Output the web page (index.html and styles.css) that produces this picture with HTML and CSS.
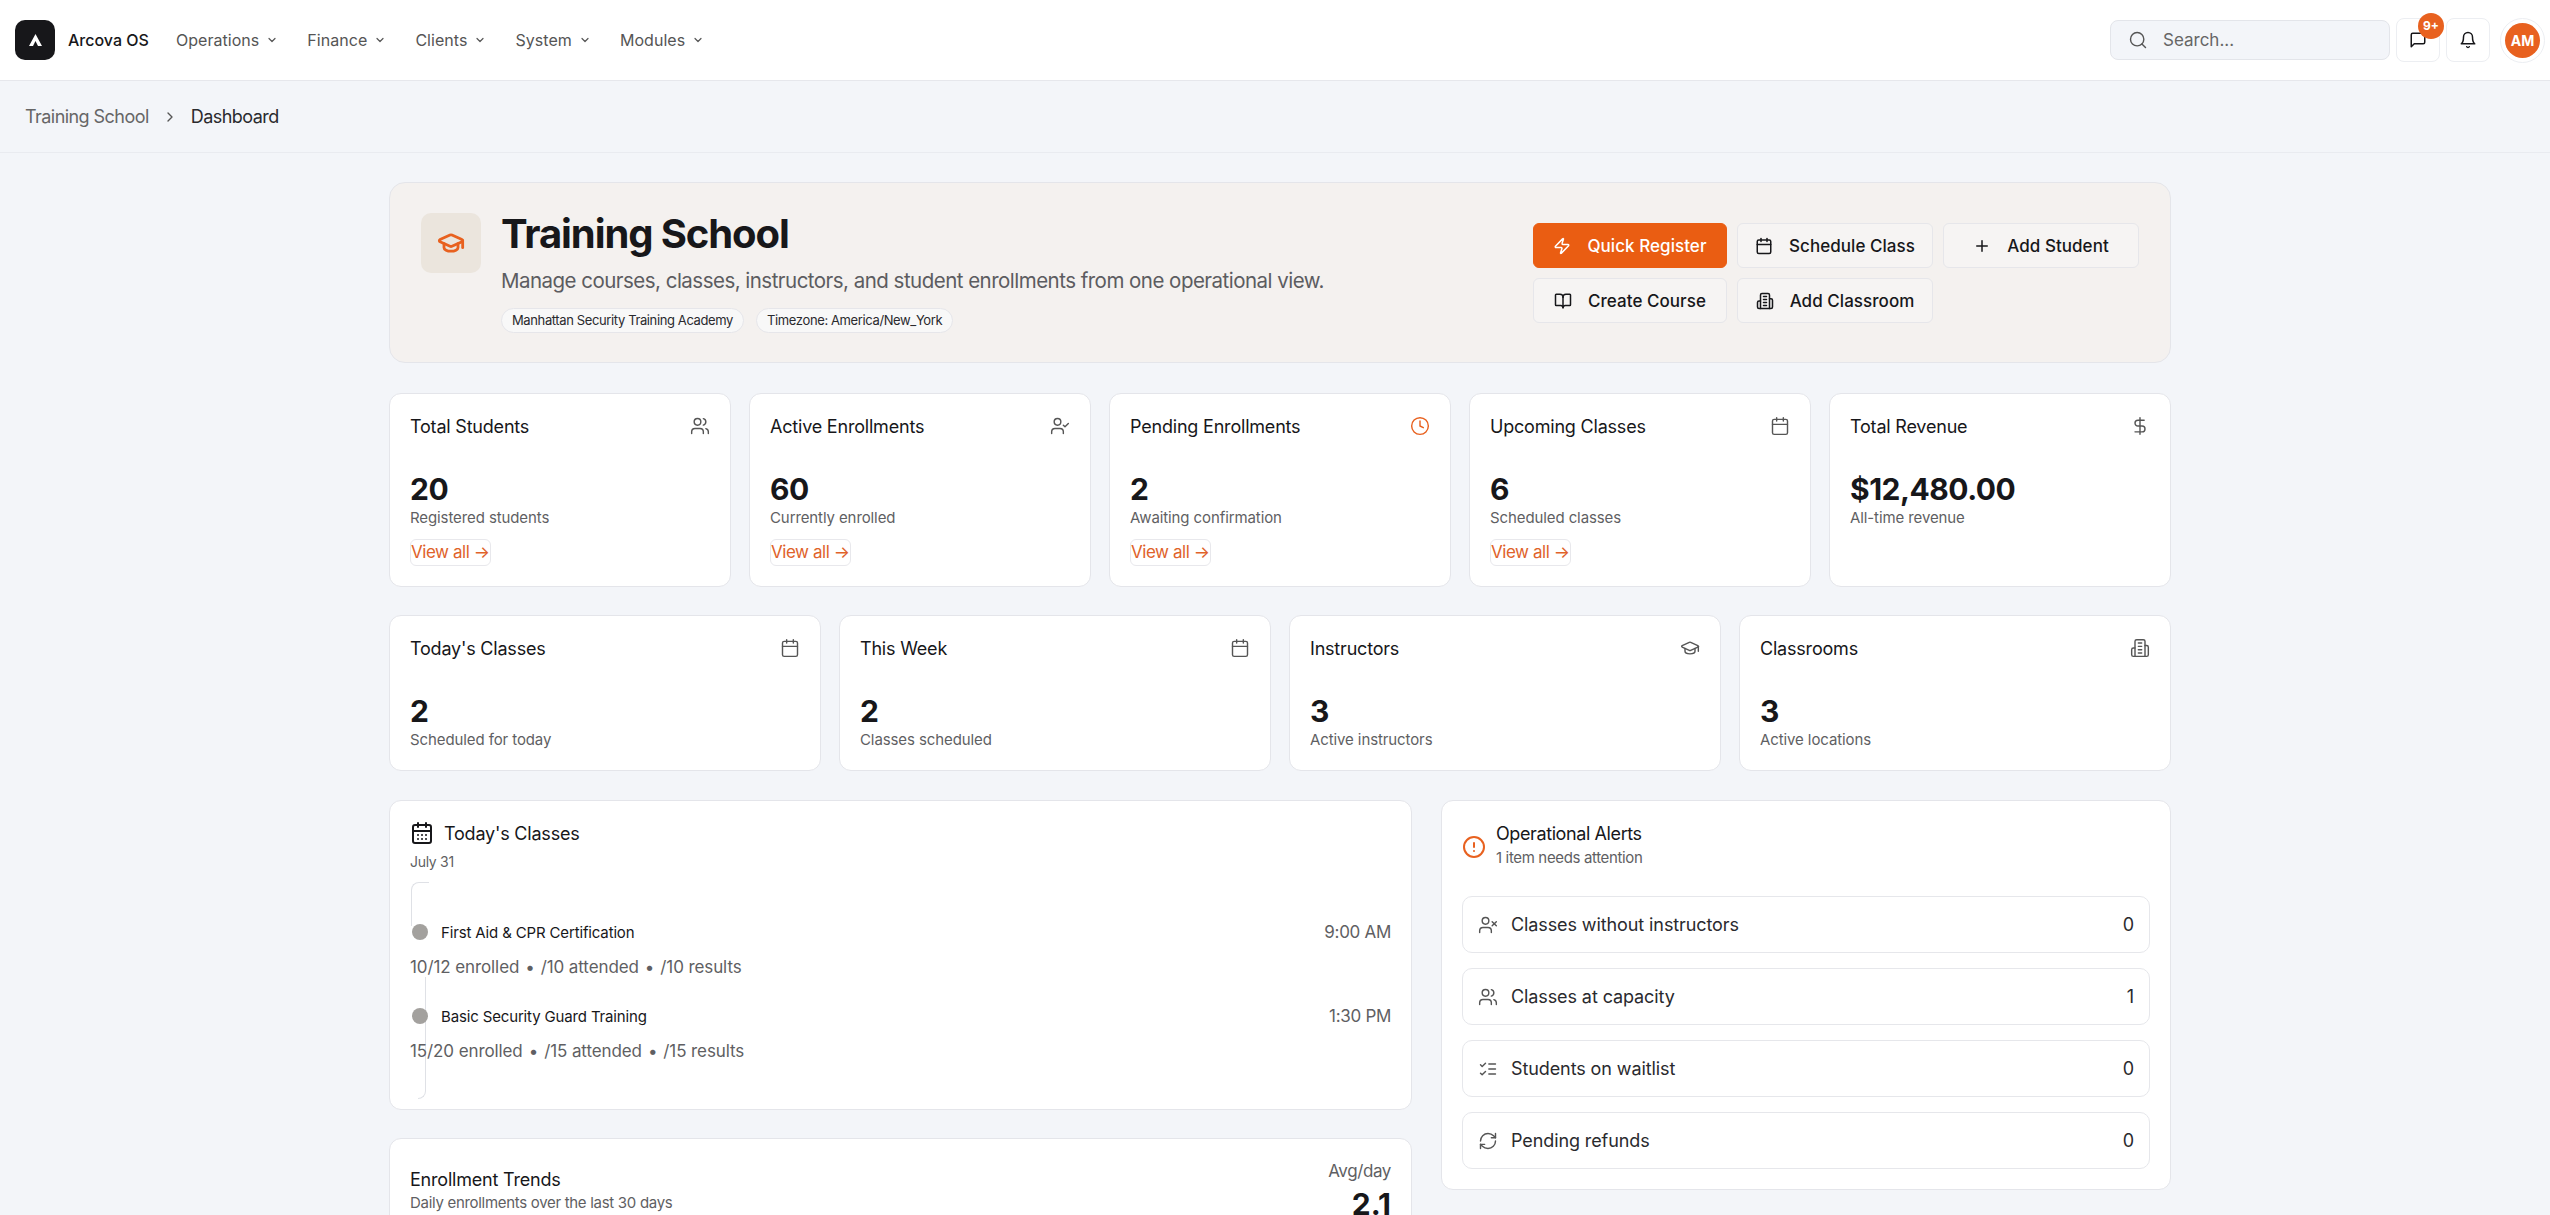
FILE: index.html
```html
<!DOCTYPE html>
<html>
<head>
<title>Training School - Arcova OS</title>
<meta charset="UTF-8">
<meta name="viewport" content="width=device-width, initial-scale=1.0">
<link rel="stylesheet" href="styles.css">
</head>
<body>
<svg class="sprite" width="0" height="0">
  <symbol id="i-chev" viewBox="0 0 24 24"><path d="m6 9 6 6 6-6"/></symbol>
  <symbol id="i-right" viewBox="0 0 24 24"><path d="m9 18 6-6-6-6"/></symbol>
  <symbol id="i-search" viewBox="0 0 24 24"><circle cx="11" cy="11" r="8"/><path d="m21 21-4.3-4.3"/></symbol>
  <symbol id="i-msg" viewBox="0 0 24 24"><path d="M21 15a2 2 0 0 1-2 2H7l-4 4V5a2 2 0 0 1 2-2h14a2 2 0 0 1 2 2z"/></symbol>
  <symbol id="i-bell" viewBox="0 0 24 24"><path d="M6 8a6 6 0 0 1 12 0c0 7 3 9 3 9H3s3-2 3-9"/><path d="M10.3 21a1.94 1.94 0 0 0 3.4 0"/></symbol>
  <symbol id="i-cap" viewBox="0 0 24 24"><path d="M21.42 10.92a1 1 0 0 0-.02-1.84L12.83 5.18a2 2 0 0 0-1.66 0L2.6 9.08a1 1 0 0 0 0 1.83l8.57 3.91a2 2 0 0 0 1.66 0z"/><path d="M22 10v6"/><path d="M6 12.5V16a6 3 0 0 0 12 0v-3.5"/></symbol>
  <symbol id="i-zap" viewBox="0 0 24 24"><path d="M4 14a1 1 0 0 1-.78-1.63l9.9-10.2a.5.5 0 0 1 .86.46l-1.92 6.02A1 1 0 0 0 13 10h7a1 1 0 0 1 .78 1.63l-9.9 10.2a.5.5 0 0 1-.86-.46l1.92-6.02A1 1 0 0 0 11 14z"/></symbol>
  <symbol id="i-cal" viewBox="0 0 24 24"><path d="M8 2v4"/><path d="M16 2v4"/><rect x="3" y="4" width="18" height="18" rx="2"/><path d="M3 10h18"/></symbol>
  <symbol id="i-cal-days" viewBox="0 0 24 24"><path d="M8 2v4"/><path d="M16 2v4"/><rect x="3" y="4" width="18" height="18" rx="2"/><path d="M3 10h18"/><path d="M8 14h.01M12 14h.01M16 14h.01M8 18h.01M12 18h.01M16 18h.01"/></symbol>
  <symbol id="i-plus" viewBox="0 0 24 24"><path d="M5 12h14"/><path d="M12 5v14"/></symbol>
  <symbol id="i-book" viewBox="0 0 24 24"><path d="M12 7v14"/><path d="M3 18a1 1 0 0 1-1-1V4a1 1 0 0 1 1-1h5a4 4 0 0 1 4 4 4 4 0 0 1 4-4h5a1 1 0 0 1 1 1v13a1 1 0 0 1-1 1h-6a3 3 0 0 0-3 3 3 3 0 0 0-3-3z"/></symbol>
  <symbol id="i-building" viewBox="0 0 24 24"><path d="M6 22V4a2 2 0 0 1 2-2h8a2 2 0 0 1 2 2v18z"/><path d="M6 12H4a2 2 0 0 0-2 2v6a2 2 0 0 0 2 2h2"/><path d="M18 9h2a2 2 0 0 1 2 2v9a2 2 0 0 1-2 2h-2"/><path d="M10 6h4M10 10h4M10 14h4M10 18h4"/></symbol>
  <symbol id="i-users" viewBox="0 0 24 24"><path d="M16 21v-2a4 4 0 0 0-4-4H6a4 4 0 0 0-4 4v2"/><circle cx="9" cy="7" r="4"/><path d="M22 21v-2a4 4 0 0 0-3-3.87"/><path d="M16 3.13a4 4 0 0 1 0 7.75"/></symbol>
  <symbol id="i-user-check" viewBox="0 0 24 24"><path d="M16 21v-2a4 4 0 0 0-4-4H6a4 4 0 0 0-4 4v2"/><circle cx="9" cy="7" r="4"/><path d="m16 11 2 2 4-4"/></symbol>
  <symbol id="i-user-x" viewBox="0 0 24 24"><path d="M16 21v-2a4 4 0 0 0-4-4H6a4 4 0 0 0-4 4v2"/><circle cx="9" cy="7" r="4"/><path d="m17 8 5 5"/><path d="m22 8-5 5"/></symbol>
  <symbol id="i-clock" viewBox="0 0 24 24"><circle cx="12" cy="12" r="10"/><path d="M12 6v6l4 2"/></symbol>
  <symbol id="i-dollar" viewBox="0 0 24 24"><path d="M12 2v20"/><path d="M17 5H9.5a3.5 3.5 0 0 0 0 7h5a3.5 3.5 0 0 1 0 7H6"/></symbol>
  <symbol id="i-alert" viewBox="0 0 24 24"><circle cx="12" cy="12" r="10"/><path d="M12 8v4"/><path d="M12 16h.01"/></symbol>
  <symbol id="i-list" viewBox="0 0 24 24"><path d="m3 7 2 2 4-4"/><path d="m3 17 2 2 4-4"/><path d="M13 6h8"/><path d="M13 12h8"/><path d="M13 18h8"/></symbol>
  <symbol id="i-refresh" viewBox="0 0 24 24"><path d="M3 12a9 9 0 0 1 9-9 9.75 9.75 0 0 1 6.74 2.74L21 8"/><path d="M21 3v5h-5"/><path d="M21 12a9 9 0 0 1-9 9 9.75 9.75 0 0 1-6.74-2.74L3 16"/><path d="M8 16H3v5"/></symbol>
</svg>

<header class="top-bar">
  <div class="logo"><svg viewBox="0 0 40 40" width="40" height="40"><path class="logo-mark" d="M20.5 14 L27 26 H23 L20.5 21 L18 26 H14 Z"/></svg></div>
  <span class="brand">Arcova OS</span>
  <nav class="nav">
    <a>Operations <svg class="ico ico-12"><use href="#i-chev"/></svg></a>
    <a>Finance <svg class="ico ico-12"><use href="#i-chev"/></svg></a>
    <a>Clients <svg class="ico ico-12"><use href="#i-chev"/></svg></a>
    <a>System <svg class="ico ico-12"><use href="#i-chev"/></svg></a>
    <a>Modules <svg class="ico ico-12"><use href="#i-chev"/></svg></a>
  </nav>
  <div class="top-right">
    <div class="search"><svg class="ico ico-20"><use href="#i-search"/></svg><span>Search...</span></div>
    <div class="icon-btn"><svg class="ico ico-18 dark"><use href="#i-msg"/></svg><span class="badge">9+</span></div>
    <div class="icon-btn"><svg class="ico ico-18 dark"><use href="#i-bell"/></svg></div>
    <div class="avatar"><span>AM</span></div>
  </div>
</header>

<div class="crumbs">
  <span>Training School</span>
  <svg class="ico ico-16"><use href="#i-right"/></svg>
  <span class="crumb-on">Dashboard</span>
</div>

<main class="container">
  <section class="hero">
    <div class="hero-left">
      <div class="hero-icon"><svg class="ico ico-28 orange"><use href="#i-cap"/></svg></div>
      <div class="hero-text">
        <h1>Training School</h1>
        <p class="hero-sub">Manage courses, classes, instructors, and student enrollments from one operational view.</p>
        <div class="chips"><span class="chip">Manhattan Security Training Academy</span><span class="chip">Timezone: America/New_York</span></div>
      </div>
    </div>
    <div class="hero-actions">
      <button class="btn btn-main"><svg class="ico ico-18"><use href="#i-zap"/></svg>Quick Register</button>
      <button class="btn"><svg class="ico ico-18"><use href="#i-cal"/></svg>Schedule Class</button>
      <button class="btn"><svg class="ico ico-18"><use href="#i-plus"/></svg>Add Student</button>
      <button class="btn"><svg class="ico ico-18"><use href="#i-book"/></svg>Create Course</button>
      <button class="btn"><svg class="ico ico-18"><use href="#i-building"/></svg>Add Classroom</button>
    </div>
  </section>

  <section class="stats stats-5">
    <div class="stat">
      <div class="stat-head"><span>Total Students</span><svg class="ico ico-20"><use href="#i-users"/></svg></div>
      <div class="stat-num">20</div>
      <div class="stat-sub">Registered students</div>
      <a class="view-all">View all →</a>
    </div>
    <div class="stat">
      <div class="stat-head"><span>Active Enrollments</span><svg class="ico ico-20"><use href="#i-user-check"/></svg></div>
      <div class="stat-num">60</div>
      <div class="stat-sub">Currently enrolled</div>
      <a class="view-all">View all →</a>
    </div>
    <div class="stat">
      <div class="stat-head"><span>Pending Enrollments</span><svg class="ico ico-20 orange"><use href="#i-clock"/></svg></div>
      <div class="stat-num">2</div>
      <div class="stat-sub">Awaiting confirmation</div>
      <a class="view-all">View all →</a>
    </div>
    <div class="stat">
      <div class="stat-head"><span>Upcoming Classes</span><svg class="ico ico-20"><use href="#i-cal"/></svg></div>
      <div class="stat-num">6</div>
      <div class="stat-sub">Scheduled classes</div>
      <a class="view-all">View all →</a>
    </div>
    <div class="stat">
      <div class="stat-head"><span>Total Revenue</span><svg class="ico ico-20"><use href="#i-dollar"/></svg></div>
      <div class="stat-num">$12,480.00</div>
      <div class="stat-sub">All-time revenue</div>
    </div>
  </section>

  <section class="stats stats-4">
    <div class="stat">
      <div class="stat-head"><span>Today's Classes</span><svg class="ico ico-20"><use href="#i-cal"/></svg></div>
      <div class="stat-num">2</div>
      <div class="stat-sub">Scheduled for today</div>
    </div>
    <div class="stat">
      <div class="stat-head"><span>This Week</span><svg class="ico ico-20"><use href="#i-cal"/></svg></div>
      <div class="stat-num">2</div>
      <div class="stat-sub">Classes scheduled</div>
    </div>
    <div class="stat">
      <div class="stat-head"><span>Instructors</span><svg class="ico ico-20"><use href="#i-cap"/></svg></div>
      <div class="stat-num">3</div>
      <div class="stat-sub">Active instructors</div>
    </div>
    <div class="stat">
      <div class="stat-head"><span>Classrooms</span><svg class="ico ico-20"><use href="#i-building"/></svg></div>
      <div class="stat-num">3</div>
      <div class="stat-sub">Active locations</div>
    </div>
  </section>

  <section class="lower">
    <div class="lower-left">
      <div class="card classes">
        <div class="card-title"><svg class="ico ico-24 dark"><use href="#i-cal-days"/></svg><span>Today's Classes</span></div>
        <div class="card-date">July 31</div>
        <div class="timeline">
          <span class="line-a"></span>
          <span class="line-b"></span>
          <div class="tl-row">
            <span class="dot"></span><span class="tl-name">First Aid &amp; CPR Certification</span><span class="tl-time">9:00 AM</span>
          </div>
          <div class="tl-meta">10/12 enrolled<span class="sep">•</span>/10 attended<span class="sep">•</span>/10 results</div>
          <div class="tl-row tl-row-2">
            <span class="dot"></span><span class="tl-name">Basic Security Guard Training</span><span class="tl-time">1:30 PM</span>
          </div>
          <div class="tl-meta">15/20 enrolled<span class="sep">•</span>/15 attended<span class="sep">•</span>/15 results</div>
        </div>
      </div>
      <div class="card trends">
        <div>
          <div class="trend-title">Enrollment Trends</div>
          <div class="trend-sub">Daily enrollments over the last 30 days</div>
        </div>
        <div class="trend-right">
          <div class="trend-avg">Avg/day</div>
          <div class="trend-num">2.1</div>
        </div>
      </div>
    </div>

    <div class="card alerts">
      <div class="alert-head">
        <svg class="ico ico-24 orange"><use href="#i-alert"/></svg>
        <div class="alert-text">
          <div class="alert-title">Operational Alerts</div>
          <div class="alert-sub">1 item needs attention</div>
        </div>
      </div>
      <div class="alert-row"><svg class="ico ico-20"><use href="#i-user-x"/></svg><span>Classes without instructors</span><b>0</b></div>
      <div class="alert-row"><svg class="ico ico-20"><use href="#i-users"/></svg><span>Classes at capacity</span><b>1</b></div>
      <div class="alert-row"><svg class="ico ico-20"><use href="#i-list"/></svg><span>Students on waitlist</span><b>0</b></div>
      <div class="alert-row"><svg class="ico ico-20"><use href="#i-refresh"/></svg><span>Pending refunds</span><b>0</b></div>
    </div>
  </section>
</main>
</body>
</html>
```

FILE: styles.css
```css
* {
  box-sizing: border-box;
}
html, body {
  height: 100%;
  overflow: hidden;
}
body {
  margin: 0;
  background-color: #f3f5f9;
  color: #17171a;
  font-family: Inter, "Liberation Sans", sans-serif;
}
.sprite {
  position: absolute;
}

/* icons */
.ico {
  fill: none;
  stroke: #555;
  stroke-width: 2;
  stroke-linecap: round;
  stroke-linejoin: round;
  flex: none;
}
.ico.dark { stroke: #17171a; }
.ico.orange { stroke: #e8611f; }
.ico-12 { width: 12px; height: 12px; stroke-width: 2.4; }
.ico-16 { width: 16px; height: 16px; }
.ico-18 { width: 18px; height: 18px; }
.ico-20 { width: 20px; height: 20px; stroke-width: 1.7; }
.ico-24 { width: 24px; height: 24px; }
.ico-28 { width: 28px; height: 28px; stroke-width: 2.4; }

/* top bar */
.top-bar {
  display: flex;
  align-items: center;
  height: 81px;
  padding: 0 5px 0 15px;
  background-color: #fff;
  border-bottom: 1px solid #e6e7ec;
}
.logo {
  width: 40px;
  height: 40px;
  background-color: #17171a;
  border-radius: 10px;
}
.logo-mark {
  fill: #fff;
}
.brand {
  margin-left: 13px;
  font-size: 16px;
  font-weight: 500;
}
.nav {
  display: flex;
  gap: 29px;
  margin-left: 27px;
  font-size: 16px;
  letter-spacing: 0.05px;
  color: #555;
}
.nav a {
  display: flex;
  align-items: center;
  gap: 7px;
}
.top-right {
  display: flex;
  align-items: center;
  margin-left: auto;
}
.search {
  display: flex;
  align-items: center;
  gap: 15px;
  width: 280px;
  height: 40px;
  padding-left: 17px;
  background-color: #f3f5f9;
  border: 1px solid #e3e5ea;
  border-radius: 8px;
  font-size: 17px;
  color: #666;
}
.icon-btn {
  position: relative;
  display: flex;
  align-items: center;
  justify-content: center;
  width: 44px;
  height: 44px;
  margin-left: 6px;
  border: 1px solid #eceef2;
  border-radius: 8px;
}
.badge {
  position: absolute;
  top: -6px;
  right: -5px;
  width: 26px;
  height: 26px;
  line-height: 26px;
  text-align: center;
  font-size: 12px;
  font-weight: 700;
  color: #fff;
  background-color: #e8611f;
  border-radius: 50%;
}
.avatar {
  display: flex;
  align-items: center;
  justify-content: center;
  width: 45px;
  height: 45px;
  margin-left: 10px;
  border: 1px solid #eceef2;
  border-radius: 50%;
}
.avatar span {
  width: 35px;
  height: 35px;
  line-height: 35px;
  text-align: center;
  font-size: 14px;
  font-weight: 700;
  color: #fff;
  background-color: #e8611f;
  border-radius: 50%;
}

/* breadcrumb */
.crumbs {
  display: flex;
  align-items: center;
  gap: 13px;
  height: 72px;
  padding-left: 25px;
  border-bottom: 1px solid #e9ebf0;
  font-size: 18px;
  letter-spacing: -0.55px;
  color: #666;
}
.crumb-on {
  color: #2a2a2e;
}

/* main */
.container {
  width: 1782px;
  margin-left: 389px;
  padding-top: 29px;
}
.hero {
  display: flex;
  justify-content: space-between;
  height: 181px;
  padding: 30px 31px 0;
  background-color: #f4f1ef;
  border: 1px solid #e4e5ea;
  border-radius: 16px;
}
.hero-left {
  display: flex;
  gap: 20px;
}
.hero-icon {
  display: flex;
  align-items: center;
  justify-content: center;
  width: 60px;
  height: 60px;
  background-color: #ebe5dd;
  border-radius: 10px;
}
.hero-text {
  margin-top: -3px;
}
h1 {
  margin: 0;
  font-size: 40px;
  line-height: 48px;
  font-weight: 700;
  letter-spacing: -1.1px;
}
.hero-sub {
  margin: 8px 0 0;
  font-size: 20.5px;
  line-height: 30px;
  letter-spacing: -0.52px;
  color: #5c5c60;
}
.chips {
  display: flex;
  gap: 12px;
  margin-top: 12px;
}
.chip {
  padding: 0 10px;
  height: 25px;
  line-height: 23px;
  font-size: 13px;
  letter-spacing: -0.38px;
  color: #2a2a2e;
  background-color: #f8f8f8;
  border: 1px solid #e6e6ea;
  border-radius: 13px;
}
.hero-actions {
  display: grid;
  grid-template-columns: 194px 196px 196px;
  grid-auto-rows: 45px;
  gap: 10px;
  margin-top: 10px;
}
.btn {
  display: flex;
  align-items: center;
  justify-content: center;
  gap: 16px;
  padding: 0;
  font-family: inherit;
  font-size: 17px;
  font-weight: 500;
  letter-spacing: 0.05px;
  color: #17171a;
  background-color: #f6f4f3;
  border: 1px solid #e6e6ea;
  border-radius: 6px;
}
.btn .ico {
  stroke: #17171a;
}
.btn-main {
  color: #fff;
  background-color: #ea5d12;
  border-color: #ea5d12;
}
.btn-main .ico {
  stroke: #fff;
}

/* stat cards */
.stats {
  display: grid;
  gap: 18px;
  margin-top: 30px;
}
.stats-5 {
  grid-template-columns: repeat(5, 1fr);
}
.stats-4 {
  grid-template-columns: repeat(4, 1fr);
  margin-top: 28px;
}
.stat {
  padding: 20px 20px 0;
  background-color: #fff;
  border: 1px solid #e4e5ea;
  border-radius: 12px;
}
.stats-5 .stat { height: 194px; }
.stats-4 .stat { height: 156px; }
.stat-head {
  display: flex;
  align-items: center;
  justify-content: space-between;
  height: 24px;
  font-size: 18px;
  letter-spacing: -0.2px;
}
.stat-num {
  margin-top: 32px;
  font-size: 30px;
  line-height: 38px;
  font-weight: 700;
  letter-spacing: -0.5px;
}
.stat-sub {
  font-size: 15px;
  line-height: 20px;
  letter-spacing: -0.1px;
  color: #5f5f63;
}
.view-all {
  display: inline-block;
  margin-top: 11px;
  padding: 0 1px 0 0;
  height: 27px;
  line-height: 25px;
  font-size: 17px;
  letter-spacing: -0.45px;
  color: #e0622a;
  border: 1px solid #e8e8ec;
  border-radius: 6px;
}

/* lower area */
.lower {
  display: grid;
  grid-template-columns: 1023px 730px;
  gap: 29px;
  margin-top: 29px;
  align-items: start;
}
.lower-left {
  display: flex;
  flex-direction: column;
  gap: 28px;
}
.card {
  background-color: #fff;
  border: 1px solid #e4e5ea;
  border-radius: 12px;
}
.classes {
  height: 310px;
  padding: 20px;
}
.card-title {
  display: flex;
  align-items: center;
  gap: 10px;
  height: 24px;
  font-size: 18px;
  letter-spacing: -0.2px;
}
.card-date {
  margin-top: 7px;
  font-size: 14px;
  line-height: 20px;
  letter-spacing: -0.3px;
  color: #5f5f63;
}
.timeline {
  position: relative;
  margin-top: 48px;
}
.line-a {
  position: absolute;
  top: -38px;
  left: 1px;
  width: 18px;
  height: 44px;
  border-left: 1px solid #dfe1e6;
  border-top: 1px solid #dfe1e6;
  border-top-left-radius: 8px;
}
.line-b {
  position: absolute;
  top: 57px;
  left: 8px;
  width: 8px;
  height: 122px;
  border-right: 1px solid #dfe1e6;
  border-bottom: 1px solid #dfe1e6;
  border-bottom-right-radius: 8px;
}
.tl-row {
  position: relative;
  display: flex;
  align-items: center;
  height: 24px;
}
.tl-row-2 {
  margin-top: 25px;
}
.dot {
  width: 16px;
  height: 16px;
  margin-left: 2px;
  background-color: #a3a19e;
  border-radius: 50%;
}
.tl-name {
  margin-left: 13px;
  font-size: 15px;
  letter-spacing: -0.15px;
}
.tl-time {
  margin-left: auto;
  font-size: 17px;
  letter-spacing: -0.3px;
  color: #5f5f63;
}
.tl-meta {
  position: relative;
  margin-top: 11px;
  font-size: 17px;
  line-height: 24px;
  letter-spacing: -0.1px;
  color: #5f5f63;
}
.sep {
  margin: 0 6px;
}
.trends {
  display: flex;
  justify-content: space-between;
  height: 120px;
  padding: 20px;
}
.trend-title {
  margin-top: 9px;
  font-size: 18px;
  line-height: 24px;
  letter-spacing: -0.2px;
}
.trend-sub {
  font-size: 15px;
  line-height: 22px;
  letter-spacing: -0.3px;
  color: #5f5f63;
}
.trend-right {
  text-align: right;
}
.trend-avg {
  font-size: 17px;
  line-height: 24px;
  letter-spacing: -0.4px;
  color: #5f5f63;
}
.trend-num {
  margin-top: 2px;
  font-size: 30px;
  line-height: 38px;
  font-weight: 700;
}
.alerts {
  height: 390px;
  padding: 20px;
}
.alert-head {
  display: flex;
  align-items: center;
  gap: 10px;
  height: 52px;
  margin-bottom: 23px;
}
.alert-text {
  padding-bottom: 4px;
}
.alert-title {
  font-size: 18px;
  line-height: 24px;
  letter-spacing: -0.4px;
}
.alert-sub {
  margin-top: 2px;
  font-size: 15px;
  line-height: 20px;
  letter-spacing: -0.35px;
  color: #5f5f63;
}
.alert-row {
  display: flex;
  align-items: center;
  gap: 13px;
  height: 57px;
  margin-bottom: 15px;
  padding: 0 15px;
  border: 1px solid #e6e7eb;
  border-radius: 10px;
  font-size: 18px;
  letter-spacing: -0.1px;
  color: #2a2a2e;
}
.alert-row b {
  margin-left: auto;
  font-weight: 400;
}
```
